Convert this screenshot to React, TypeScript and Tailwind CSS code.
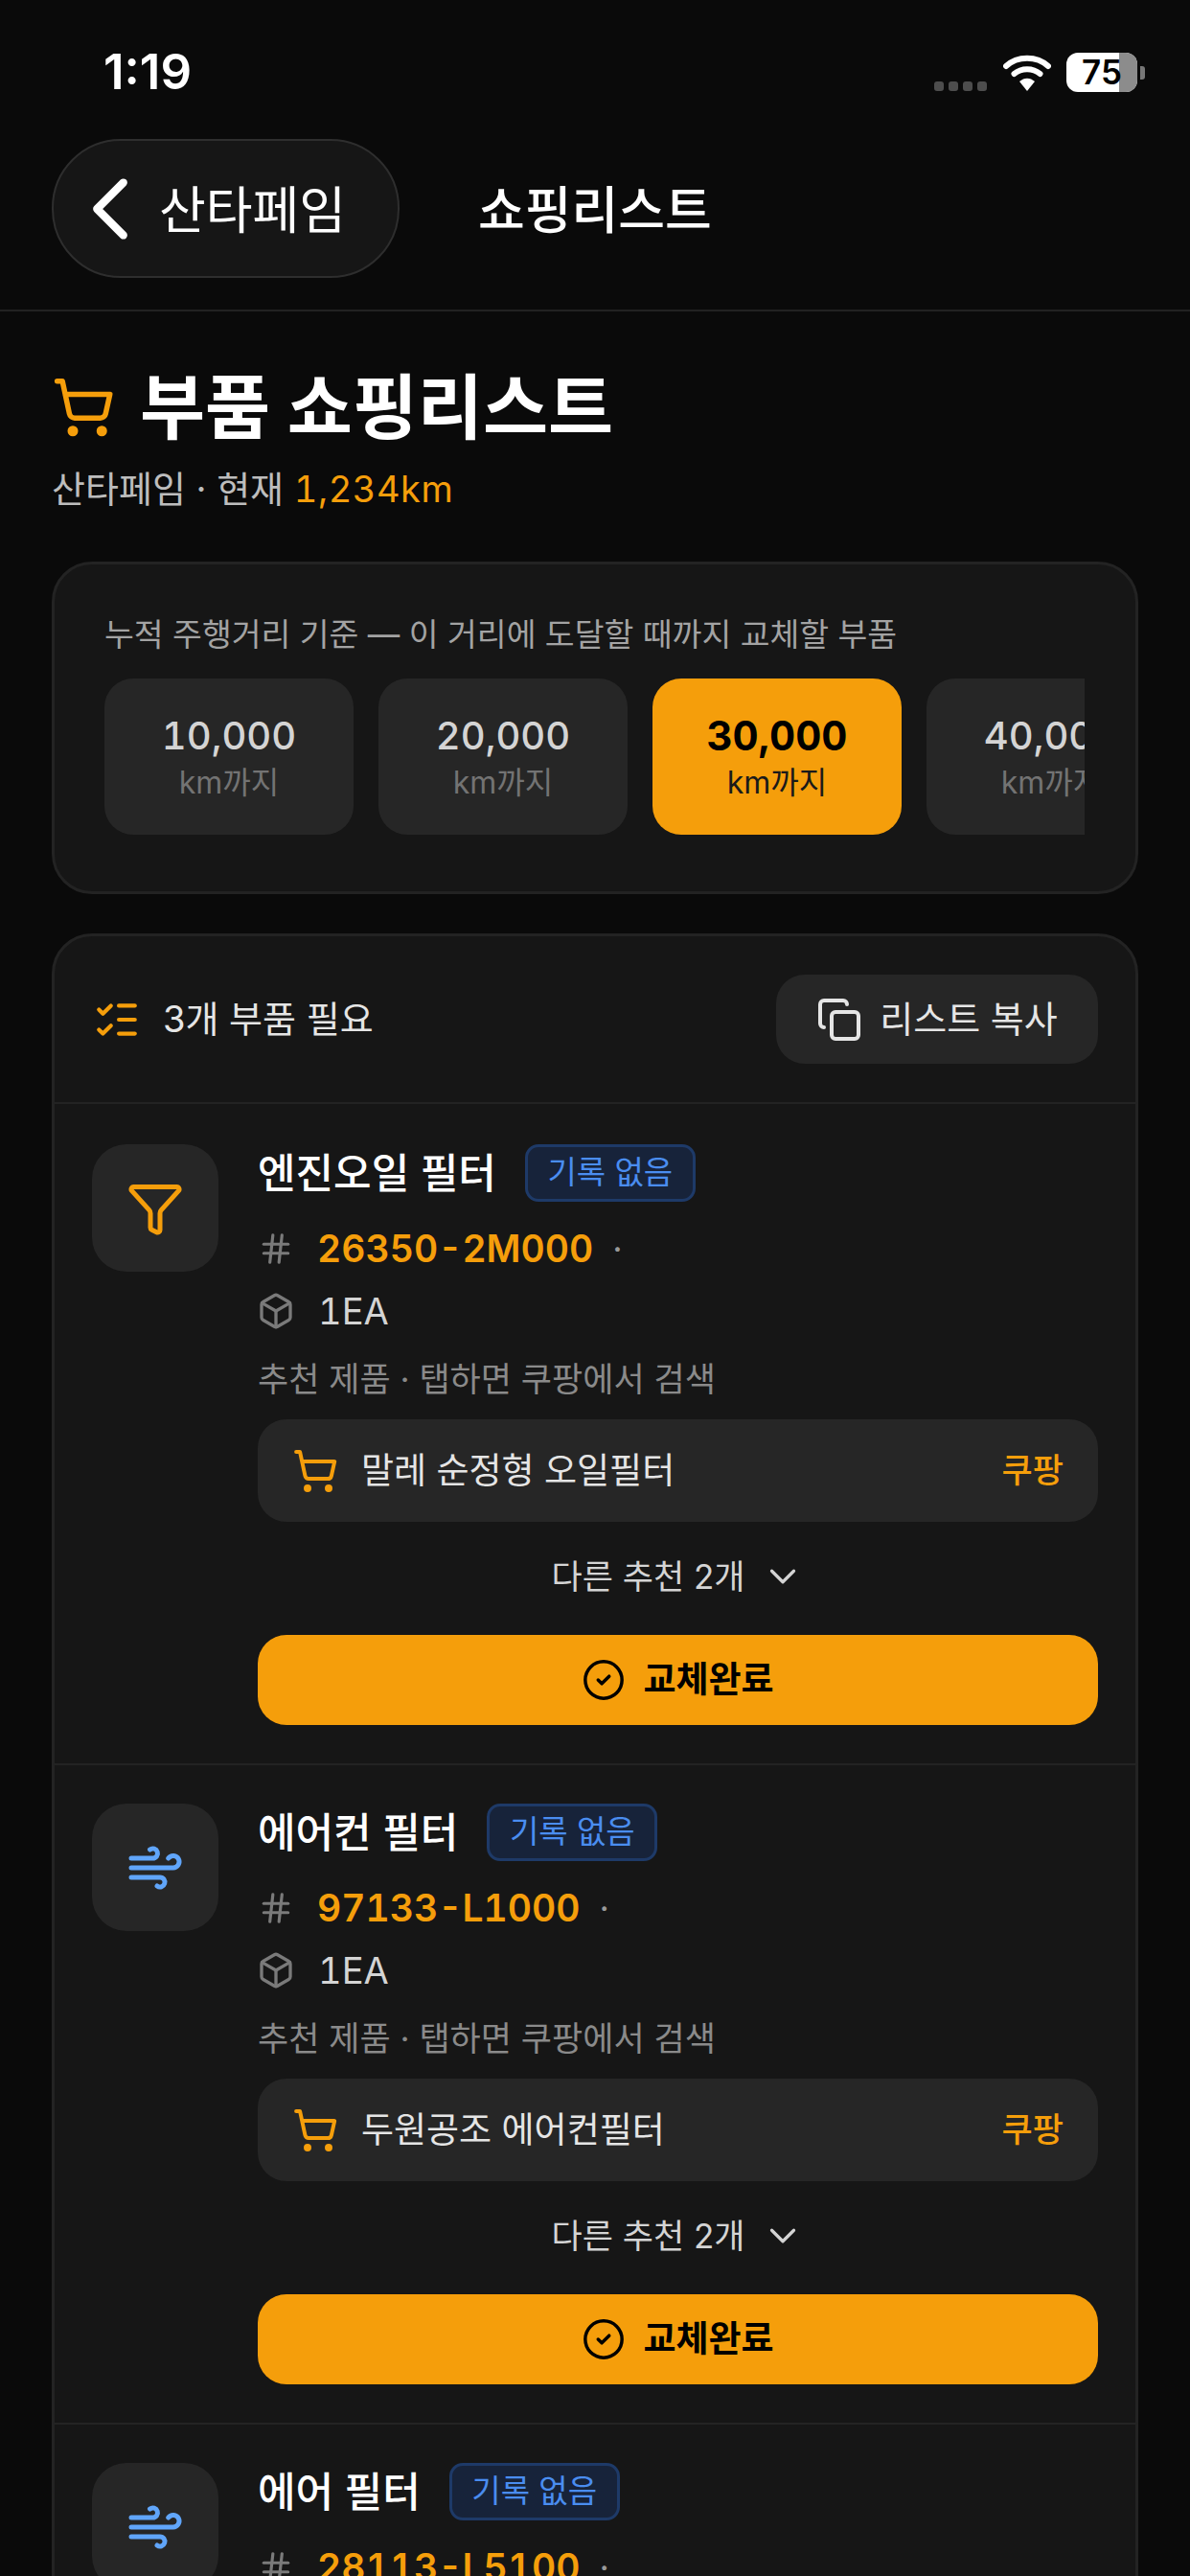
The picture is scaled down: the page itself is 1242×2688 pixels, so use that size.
import React from 'react';
import { ChevronLeft, ChevronDown, ShoppingCart, ListChecks, Copy, Funnel, Wind, Hash, Box, CircleCheck } from 'lucide-react';

const distances = [
  { value: '10,000', active: false },
  { value: '20,000', active: false },
  { value: '30,000', active: true },
  { value: '40,000', active: false },
];

const parts = [
  { name: '엔진오일 필터', code: '26350-2M000', product: '말레 순정형 오일필터', icon: 'filter' },
  { name: '에어컨 필터', code: '97133-L1000', product: '두원공조 에어컨필터', icon: 'wind' },
  { name: '에어 필터', code: '28113-L5100', product: '말레 에어필터', icon: 'wind' },
];

const StatusBar = () => (
  <div className="flex h-[145px] items-start justify-between pl-[108px] pr-[47px] pt-[50px]">
    <span className="text-[51px] leading-[50px] font-semibold text-white">1:19</span>
    <div className="mt-[5px] flex items-center">
      <div className="mt-[29px] flex gap-[5px]">
        <span className="h-[10px] w-[10px] rounded-[3px] bg-[#4d4d4d]" />
        <span className="h-[10px] w-[10px] rounded-[3px] bg-[#4d4d4d]" />
        <span className="h-[10px] w-[10px] rounded-[3px] bg-[#4d4d4d]" />
        <span className="h-[10px] w-[10px] rounded-[3px] bg-[#4d4d4d]" />
      </div>
      <svg className="ml-[17px]" width="50" height="40" viewBox="0 0 50 40" fill="none">
        <path d="M3 13C15 2 35 2 47 13" stroke="white" strokeWidth="6" strokeLinecap="round" />
        <path d="M11.5 21C19 14.500 31 14.500 38.500 21" stroke="white" strokeWidth="6" strokeLinecap="round" />
        <path d="M17 29C22 24.500 28 24.500 33 29L25 39Z" fill="white" />
      </svg>
      <div className="relative ml-[16px] flex h-[41px] w-[74px] items-center justify-center overflow-hidden rounded-[12px] bg-white">
        <div className="absolute inset-y-0 right-0 w-[19px] bg-[#8c8c8c]" />
        <span className="relative text-[35px] leading-none font-semibold text-black">75</span>
      </div>
      <div className="ml-[3px] h-[14px] w-[5px] rounded-r-[3px] bg-[#777]" />
    </div>
  </div>
);

const PartItem = ({ part, first }: { part: (typeof parts)[number]; first: boolean }) => (
  <div className={`flex gap-[41px] px-[39px] pb-[40px] ${first ? 'pt-[42px]' : 'border-t-[2px] border-[#232323] pt-[40px]'}`}>
    <div className="flex h-[133px] w-[132px] shrink-0 items-center justify-center rounded-[36px] bg-[#262626]">
      {part.icon === 'filter' ? (
        <Funnel size={60} strokeWidth={2} className="text-[#f59e0b]" />
      ) : (
        <Wind size={60} strokeWidth={2} className="text-[#60a5fa]" />
      )}
    </div>
    <div className="min-w-0 flex-1">
      <div className="flex h-[60px] items-center gap-[30px]">
        <span className="text-[43px] font-medium text-white">{part.name}</span>
        <span className="flex h-[60px] w-[178px] items-center justify-center rounded-[14px] border-[3px] border-[#1e3a68] bg-[#17233a] text-[33px] text-[#4a8df0]">
          기록 없음
        </span>
      </div>
      <div className="mt-[22px] flex h-[54px] items-center">
        <Hash size={38} strokeWidth={2} className="text-[#7a7a7a]" />
        <span className="ml-[24px] text-[39px] font-semibold text-[#f59e0b] tabular-nums">{part.code}</span>
        <span className="ml-[20px] text-[36px] text-[#999]">·</span>
      </div>
      <div className="mt-[11px] flex h-[54px] items-center">
        <Box size={40} strokeWidth={2} className="-ml-[1px] text-[#7a7a7a]" />
        <span className="ml-[24px] text-[38px] text-[#d4d4d4] tabular-nums">1EA</span>
      </div>
      <div className="mt-[22px] flex h-[44px] items-center text-[35px] text-[#8a8a8a]">추천 제품 · 탭하면 쿠팡에서 검색</div>
      <div className="mt-[20px] flex h-[107px] items-center justify-between rounded-[30px] bg-[#262626] pr-[36px] pl-[36px]">
        <div className="flex items-center gap-[24px]">
          <ShoppingCart size={48} strokeWidth={2} className="text-[#f59e0b]" />
          <span className="text-[37px] text-[#e5e5e5]">{part.product}</span>
        </div>
        <span className="text-[35px] font-medium text-[#f59e0b]">쿠팡</span>
      </div>
      <div className="mt-[32px] flex h-[50px] items-center justify-center gap-[16px] text-[35px] text-[#d4d4d4]">
        <span>다른 추천 2개</span>
        <ChevronDown size={46} strokeWidth={1.7} className="text-[#d4d4d4]" />
      </div>
      <button className="mt-[36px] flex h-[94px] w-full items-center justify-center gap-[18px] rounded-[30px] bg-[#f59e0b] text-[37px] font-semibold text-black">
        <CircleCheck size={46} strokeWidth={1.8} />
        <span>교체완료</span>
      </button>
    </div>
  </div>
);

export default function App() {
  return (
    <div className="h-[2688px] w-[1242px] overflow-hidden bg-[#0a0a0a] font-['Inter','Noto_Sans_CJK_KR',sans-serif]">
      <StatusBar />

      {/* Nav */}
      <div className="flex h-[180px] items-start border-b-[2px] border-[#222] pl-[54px]">
        <div className="flex h-[145px] w-[363px] items-center rounded-[72px] border-[2px] border-[#2e2e2e] bg-[#161616] pl-[4px]">
          <ChevronLeft size={110} strokeWidth={1.8} className="shrink-0 text-white" />
          <span className="-ml-[4px] pt-[6px] text-[53px] text-white">산타페임</span>
        </div>
        <div className="ml-[82px] flex h-[145px] items-center pt-[6px] text-[53px] font-medium text-white">쇼핑리스트</div>
      </div>

      <div className="px-[54px]">
        {/* Title */}
        <div className="mt-[58px] flex h-[84px] items-center gap-[26px]">
          <ShoppingCart size={66} strokeWidth={2} className="shrink-0 text-[#f59e0b]" />
          <h1 className="text-[74px] leading-none font-bold text-white">부품 쇼핑리스트</h1>
        </div>
        <p className="mt-[20px] flex h-[46px] items-center text-[38px] text-[#bdbdbd]">
          산타페임 · 현재&nbsp;<span className="tracking-[0.5px] text-[#f59e0b] tabular-nums">1,234km</span>
        </p>

        {/* Distance picker */}
        <div className="mt-[53px] h-[347px] rounded-[42px] border-[3px] border-[#232323] bg-[#161616] pt-[53px] pl-[52px]">
          <p className="flex h-[40px] items-center text-[33.500px] text-[#a3a3a3]">누적 주행거리 기준 — 이 거리에 도달할 때까지 교체할 부품</p>
          <div className="mt-[26px] flex w-[1023px] gap-[26px] overflow-hidden">
            {distances.map((d) => (
              <div
                key={d.value}
                className={`flex h-[163px] w-[260px] shrink-0 flex-col items-center justify-center rounded-[30px] ${d.active ? 'bg-[#f59e0b]' : 'bg-[#262626]'}`}
              >
                <span className={`leading-[50px] tabular-nums ${d.active ? 'text-[42px] font-bold text-black' : 'text-[40px] font-medium text-[#d4d4d4]'}`}>{d.value}</span>
                <span className={`mt-[4px] text-[32px] leading-[40px] ${d.active ? 'text-[#1a1a1a]' : 'text-[#737373]'}`}>km까지</span>
              </div>
            ))}
          </div>
        </div>

        {/* Parts list */}
        <div className="mt-[41px] rounded-[42px] border-[3px] border-[#232323] bg-[#161616]">
          <div className="flex h-[175px] items-center justify-between border-b-[2px] border-[#232323] pr-[39px] pl-[40px]">
            <div className="flex items-center gap-[23px]">
              <ListChecks size={50} strokeWidth={2} className="text-[#f59e0b]" />
              <span className="text-[38px] text-[#e5e5e5]">3개 부품 필요</span>
            </div>
            <button className="flex h-[93px] w-[336px] items-center justify-center gap-[18px] rounded-[30px] bg-[#262626] text-[38px] text-[#e5e5e5]">
              <Copy size={48} strokeWidth={2} />
              <span>리스트 복사</span>
            </button>
          </div>
          {parts.map((part, i) => (
            <PartItem key={part.code} part={part} first={i === 0} />
          ))}
        </div>
      </div>
    </div>
  );
}
